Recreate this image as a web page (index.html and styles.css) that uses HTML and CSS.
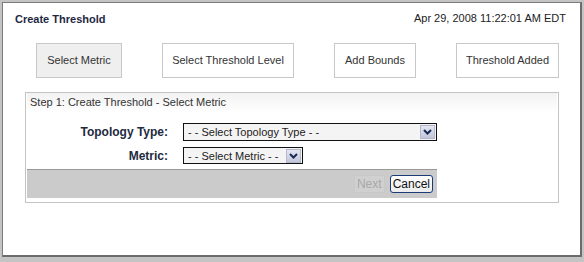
FILE: index.html
```html
<!DOCTYPE html>
<html lang="en">
<head>
<meta charset="UTF-8">
<title>Create Threshold</title>
<link rel="stylesheet" href="styles.css">
</head>
<body>

<div class="frame">
    <header class="top">
        <h1>Create Threshold</h1>
        <div class="stamp">Apr 29, 2008 11:22:01 AM EDT</div>
    </header>

    <div class="steps">
        <div class="step current metric">Select Metric</div>
        <div class="step level">Select Threshold Level</div>
        <div class="step bounds">Add Bounds</div>
        <div class="step added">Threshold Added</div>
    </div>

    <div class="wizard">
        <div class="wizard-title">Step 1: Create Threshold - Select Metric</div>
        <div class="form">
            <label>Topology Type:</label>
            <div class="dropdown wide">
                <span>- - Select Topology Type - -</span>
                <span class="arrow"><svg width="9" height="6" viewBox="0 0 9 6"><path d="M1 1 L4.5 4.5 L8 1" fill="none" stroke="#1a2a55" stroke-width="2"/></svg></span>
            </div>
            <label>Metric:</label>
            <div class="dropdown narrow">
                <span>- - Select Metric - -</span>
                <span class="arrow"><svg width="9" height="6" viewBox="0 0 9 6"><path d="M1 1 L4.5 4.5 L8 1" fill="none" stroke="#1a2a55" stroke-width="2"/></svg></span>
            </div>
        </div>
        <div class="actions">
            <button type="button" class="btn" disabled>Next</button>
            <button type="button" class="btn cancel">Cancel</button>
        </div>
    </div>
</div>

</body>
</html>
```

FILE: styles.css
```css
html {
    background-color: #c4c4c4;
}
body {
    margin: 0;
    padding: 2px;
    font-family: "Liberation Sans", Arial, sans-serif;
    font-size: 11px;
    color: #222;
}
.frame {
    background-color: #fff;
    border-left: 1px solid #7c7c7c;
    border-top: 1px solid #7c7c7c;
    border-right: 2px solid #6c6c6c;
    border-bottom: 2px solid #6c6c6c;
    height: 255px;
    box-sizing: border-box;
}
.top {
    display: flex;
    justify-content: space-between;
    align-items: flex-start;
    padding: 9px 14px 0 12px;
}
.top h1 {
    margin: 1px 0 0 0;
    font-size: 11px;
    font-weight: bold;
    color: #1e2844;
}
.stamp {
    font-size: 11px;
    color: #222;
}
.steps {
    display: flex;
    gap: 40px;
    margin: 18px 0 0 33px;
}
.step {
    flex-shrink: 0;
    height: 35px;
    line-height: 33px;
    box-sizing: border-box;
    border: 1px solid #c8c8c8;
    background-color: #fff;
    color: #333;
    text-align: center;
    white-space: nowrap;
}
.step.current {
    background-color: #efefef;
}
.step.metric {
    width: 86px;
}
.step.level {
    width: 132px;
}
.step.bounds {
    width: 82px;
}
.step.added {
    width: 103px;
}
.wizard {
    margin: 14px 0 0 22px;
    width: 534px;
    height: 111px;
    box-sizing: border-box;
    border: 1px solid #c4c4c4;
    padding: 0 1px;
}
.wizard-title {
    height: 20px;
    line-height: 18px;
    padding-left: 3px;
    color: #333;
    background: linear-gradient(#f2f2f2, #fff);
}
.form {
    display: grid;
    grid-template-columns: 141px auto;
    column-gap: 15px;
    row-gap: 6px;
    align-items: center;
    padding: 10px 0 5px 0;
}
.form label {
    text-align: right;
    font-weight: bold;
    font-size: 12px;
    color: #222a40;
}
.dropdown {
    display: flex;
    justify-content: space-between;
    align-items: center;
    height: 17px;
    box-sizing: border-box;
    border: 1px solid #111;
    background-color: #f4f4f4;
    padding-left: 4px;
    color: #222;
    white-space: nowrap;
}
.dropdown.wide {
    width: 254px;
    height: 18px;
}
.dropdown.narrow {
    width: 120px;
}
.arrow {
    display: flex;
    align-items: center;
    justify-content: center;
    width: 15px;
    height: 14px;
    margin-right: 1px;
    background: linear-gradient(#e4e6f0, #c2c6da);
    border: 1px solid #b4b8cc;
    box-sizing: border-box;
}
.actions {
    display: flex;
    justify-content: flex-end;
    align-items: center;
    gap: 5px;
    width: 410px;
    height: 29px;
    box-sizing: border-box;
    padding-right: 4px;
    background-color: #cbcbcb;
    border-top: 1px solid #999;
}
.btn {
    font-family: "Liberation Sans", Arial, sans-serif;
    font-size: 12px;
    padding: 0 2px;
    height: 18px;
    border: 1px solid #c8c8c8;
    background-color: #d0d0d0;
    color: #a8a8a8;
}
.btn.cancel {
    color: #111;
    border: 1px solid #1b3a78;
    border-radius: 3px;
    background: linear-gradient(#fff, #ececec);
}
```
